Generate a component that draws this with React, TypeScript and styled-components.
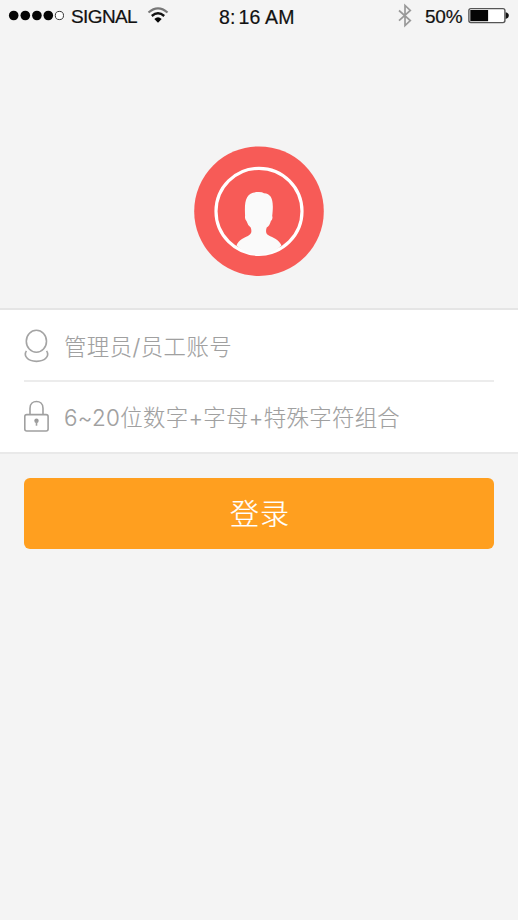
import React from 'react';
import styled, { createGlobalStyle } from 'styled-components';

const GlobalStyle = createGlobalStyle`
  * { box-sizing: border-box; }
  body { margin: 0; background: #f4f4f4; }
`;

const Screen = styled.main`
  display: flex;
  flex-direction: column;
  width: 518px;
  height: 920px;
  overflow: hidden;
  background: #f4f4f4;
  font-family: "Liberation Sans", "Noto Sans CJK SC", sans-serif;
`;

const StatusBar = styled.header`
  display: grid;
  grid-template-columns: 210px 1fr 122px;
  height: 32px;
  flex: none;
  color: #111;
`;

const StatusGroup = styled.div<{ $inset: number }>`
  display: flex;
  align-items: center;
  height: 32px;
  padding-left: ${p => p.$inset}px;
`;

const StatusText = styled.span<{ $width: number; $spacing?: number; $size?: number; $left?: number; $top?: number }>`
  flex: none;
  width: ${p => p.$width}px;
  margin-left: ${p => p.$left ?? 0}px;
  padding-top: ${p => p.$top ?? 0}px;
  font-size: ${p => p.$size ?? 19}px;
  line-height: 22px;
  letter-spacing: ${p => p.$spacing ?? 0}px;
  white-space: nowrap;
  -webkit-text-stroke: 0.2px #111;
`;

const Colon = styled.span`
  margin-right: 3px;
`;

const Icon = styled.svg`
  display: block;
  flex: none;
  overflow: visible;
`;

const Hero = styled.section`
  display: flex;
  justify-content: center;
  height: 276px;
  padding-top: 114px;
  flex: none;
`;

const Form = styled.form`
  display: flex;
  flex-direction: column;
`;

const Fields = styled.div`
  height: 146px;
  padding: 0 24px;
  background: #fff;
  border-top: 2px solid #e5e5e5;
  border-bottom: 2px solid #e9e9e9;
`;

const Field = styled.label<{ $divided?: boolean }>`
  display: flex;
  align-items: center;
  height: ${p => (p.$divided ? 72 : 70)}px;
  padding-top: ${p => (p.$divided ? 1 : 0)}px;
  border-bottom: ${p => (p.$divided ? '2px solid #ececec' : 'none')};
`;

const Hint = styled.span<{ $spacing: number; $top: number }>`
  margin-left: 15px;
  padding-top: ${p => p.$top}px;
  color: #a0a0a0;
  font-family: Inter, "Noto Sans CJK SC", sans-serif;
  font-size: 22.4px;
  font-weight: 300;
  line-height: 32px;
  letter-spacing: ${p => p.$spacing}px;
  white-space: nowrap;
  -webkit-text-stroke: 0.12px #a0a0a0;
`;

const LoginButton = styled.button`
  height: 71px;
  margin: 24px 24px 0;
  padding: 0 0 3px 2px;
  border: 0;
  border-radius: 6px;
  background: #ff9f1f;
  color: #fff;
  font-family: "Noto Sans CJK SC", sans-serif;
  font-size: 29px;
  font-weight: 300;
  line-height: 40px;
  letter-spacing: 1px;
  -webkit-text-stroke: 0.2px #fff;
`;

const SignalDots = () => (
  <Icon width="58" height="32" viewBox="8 0 58 32">
    {[13.7, 25.3, 36.9, 48.3].map(x => <circle key={x} cx={x} cy="15.5" r="4.8" fill="#050505" />)}
    <circle cx="59.4" cy="15.5" r="4.1" fill="#fff" stroke="#333" strokeWidth="1" />
  </Icon>
);

const Wifi = () => (
  <Icon width="22" height="32" viewBox="147 0 22 32" fill="none">
    <path d="M148.5 12.5Q158 4.2 167.5 12.5" stroke="#777" strokeWidth="2.2" />
    <path d="M151.8 16Q158 10.6 164.2 16" stroke="#111" strokeWidth="2.4" />
    <path d="M154.3 19Q158 15.6 161.7 19L158 22.7Z" fill="#050505" />
  </Icon>
);

const Bluetooth = () => (
  <Icon width="14" height="32" viewBox="398 0 14 32" fill="none">
    <path d="M399 10.5L410.3 20.5L405 25.5V5.5L410.3 10.5L399 20.7" stroke="#999" strokeWidth="1.7" />
  </Icon>
);

const Battery = () => (
  <Icon width="42" height="32" viewBox="468 0 42 32">
    <rect x="468.9" y="8.6" width="36" height="14" rx="2" fill="#fff" stroke="#555" strokeWidth="1.4" />
    <rect x="470.3" y="10" width="17.8" height="11.2" fill="#050505" />
    <path d="M505.7 12.3Q508.8 13 508.8 15.6T505.7 18.9Z" fill="#111" />
  </Icon>
);

const Avatar = () => (
  <Icon width="130" height="130" viewBox="0 0 130 130">
    <circle cx="65" cy="65.2" r="64.8" fill="#f75b57" />
    <circle cx="65" cy="65.3" r="43" fill="none" stroke="#fff" strokeWidth="3.2" />
    <path d="M42.5 99.5C44.5 93.5 51 91.8 55 89.3C58 87.5 57.7 84.5 56.7 81.5Q53.7 79.3 52.6 75.3Q50.4 72.5 51.1 70C50.2 53.5 52 46.1 65 46.1Q68.3 46.1 70 47.3C78.2 48 80 54.5 78.2 70Q79.2 73 76.8 75.2Q75.6 80 72.7 81.5C71.7 84.5 71.5 87.5 74.5 89.3C79 91.8 85 93.5 87.5 99.5Q78 109.1 65 109.1T42.5 99.5Z" fill="#fafafa" />
  </Icon>
);

const Person = () => (
  <Icon width="25" height="34" viewBox="24 329 25 34" fill="none" stroke="#a4a4a4" strokeWidth="1.6">
    <ellipse cx="36.4" cy="341.2" rx="10.1" ry="11" />
    <path d="M26.4 350.8C23.5 355.5 27 361.4 36.5 361.4S49.5 355.5 46.6 350.8" />
  </Icon>
);

const Lock = () => (
  <Icon width="25" height="34" viewBox="24 400 25 34" fill="none" stroke="#a0a0a0" strokeWidth="1.6">
    <rect x="24.8" y="414.6" width="23.3" height="16.4" rx="2" />
    <path d="M30 414.5V408.2C30 399.3 43 399.3 43 408.2V414.5" />
    <circle cx="36.5" cy="420.7" r="2.2" fill="#999" stroke="none" />
    <path d="M36.5 421V425.7" />
  </Icon>
);

export default function App() {
  return (
    <Screen>
      <GlobalStyle />
      <StatusBar>
        <StatusGroup $inset={8}>
          <SignalDots />
          <StatusText $width={76} $left={5} $top={1} $spacing={-0.6}>SIGNAL</StatusText>
          <Wifi />
        </StatusGroup>
        <StatusGroup $inset={9}>
          <StatusText $width={80} $top={2} $size={19.5} $spacing={0.15}>8<Colon>:</Colon>16 AM</StatusText>
        </StatusGroup>
        <StatusGroup $inset={2}>
          <Bluetooth />
          <StatusText $width={43} $left={13} $top={1} $spacing={-0.2}>50%</StatusText>
          <Battery />
        </StatusGroup>
      </StatusBar>
      <Hero><Avatar /></Hero>
      <Form onSubmit={e => e.preventDefault()}>
        <Fields>
          <Field $divided><Person /><Hint $spacing={0.45} $top={2}>管理员/员工账号</Hint></Field>
          <Field><Lock /><Hint $spacing={0.33} $top={1}>6~20位数字+字母+特殊字符组合</Hint></Field>
        </Fields>
        <LoginButton type="submit">登录</LoginButton>
      </Form>
    </Screen>
  );
}
